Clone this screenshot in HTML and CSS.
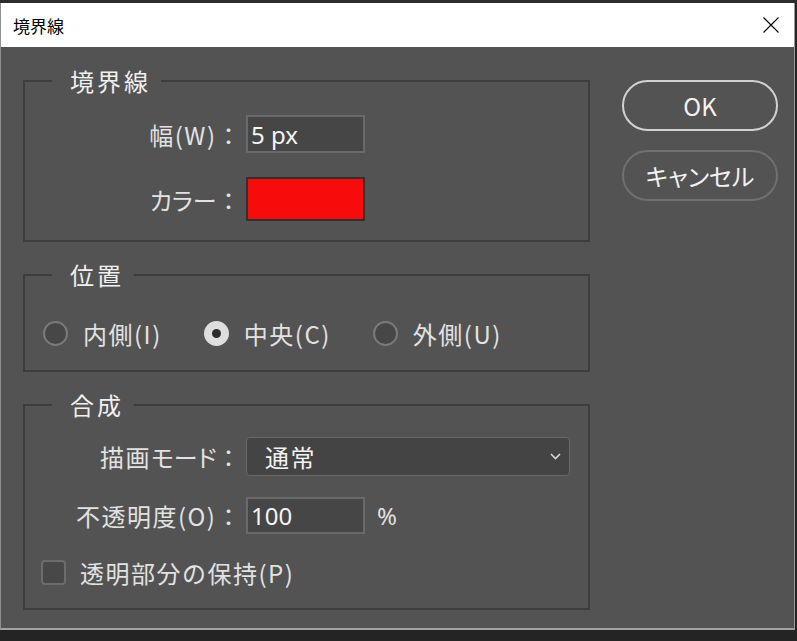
FILE: index.html
```html
<!DOCTYPE html>
<html lang="ja">
<head>
    <meta charset="UTF-8">
    <meta name="viewport" content="width=device-width, initial-scale=1.0">
    <title>境界線</title>
    <link rel="stylesheet" href="styles.css">
</head>
<body>
    <div class="window">
        <div class="titlebar">
            <span class="title">境界線</span>
            <svg class="close" width="16" height="16" viewBox="0 0 16 16">
                <path d="M0.5 0.5 L15.5 15.5 M15.5 0.5 L0.5 15.5" stroke="#000" stroke-width="1.1" fill="none"/>
            </svg>
        </div>

        <div class="dialog-body">
            <div class="panels">
                <!-- 境界線 -->
                <fieldset class="group group-stroke">
                    <legend>境界線</legend>
                    <div class="field">
                        <label class="field-label" for="width">幅(W)：</label>
                        <input class="text-input" type="text" id="width" value="5 px">
                    </div>
                    <div class="field field-color">
                        <span class="field-label"><span class="kana">カラー</span>：</span>
                        <div class="swatch"></div>
                    </div>
                </fieldset>

                <!-- 位置 -->
                <fieldset class="group group-position">
                    <legend>位置</legend>
                    <div class="radio-row">
                        <label class="option">
                            <span class="radio"></span>
                            <span>内側(I)</span>
                        </label>
                        <label class="option">
                            <span class="radio checked"></span>
                            <span>中央(C)</span>
                        </label>
                        <label class="option">
                            <span class="radio"></span>
                            <span>外側(U)</span>
                        </label>
                    </div>
                </fieldset>

                <!-- 合成 -->
                <fieldset class="group group-blend">
                    <legend>合成</legend>
                    <div class="field field-mode">
                        <span class="field-label">描画<span class="kana">モード</span>：</span>
                        <div class="select">
                            <span>通常</span>
                            <svg class="chevron" width="11" height="7" viewBox="0 0 11 7">
                                <path d="M1 1 L5.5 5.5 L10 1" stroke="#d8d8d8" stroke-width="1.6" fill="none"/>
                            </svg>
                        </div>
                    </div>
                    <div class="field field-opacity">
                        <label class="field-label" for="opacity">不透明度(O)：</label>
                        <input class="text-input" type="text" id="opacity" value="100">
                        <span class="unit">%</span>
                    </div>
                    <label class="check-row">
                        <span class="checkbox"></span>
                        <span>透明部分の保持(P)</span>
                    </label>
                </fieldset>
            </div>

            <div class="buttons">
                <button class="btn btn-primary">OK</button>
                <button class="btn btn-cancel"><span class="kana">キャンセル</span></button>
            </div>
        </div>
    </div>
</body>
</html>
```

FILE: styles.css
```css
* {
    margin: 0;
    padding: 0;
    box-sizing: border-box;
}

body {
    background: #242424;
    font-family: "Noto Sans CJK JP", "Noto Sans", sans-serif;
    height: 641px;
    overflow: hidden;
    border-top: 3px solid #2c2c2c;
}

.window {
    width: 795px;
    border-left: 1px solid #8f8f8f;
    border-right: 1px solid #9a9a9a;
    border-bottom: 2px solid #a2a2a2;
    background: #535353;
}

.titlebar {
    height: 44px;
    background: #fff;
    display: flex;
    align-items: center;
    justify-content: space-between;
    padding: 0 15px 0 12px;
}

.title {
    font-size: 17px;
    color: #000;
}

.close {
    display: block;
}

.dialog-body {
    height: 581px;
    display: flex;
    padding: 19px 0 0 22px;
    color: #e2e2e2;
    font-size: 24px;
    letter-spacing: 1.5px;
}

.panels {
    width: 567px;
    display: flex;
    flex-direction: column;
    gap: 18px;
}

.group {
    border: 2px solid #3d3d3d;
    padding: 0;
    min-width: 0;
}

.group legend {
    margin-left: 27px;
    padding: 0 10px 0 18px;
    line-height: 30px;
    color: #f0f0f0;
    letter-spacing: 3px;
}

.group-stroke {
    padding: 19px 0;
}

.group-position {
    padding: 23px 0 17px;
}

.group-blend {
    padding: 17px 0 24px;
}

.kana {
    font-feature-settings: "palt";
    letter-spacing: 0;
}

.field {
    display: flex;
    align-items: center;
    height: 38px;
}

.field-label {
    width: 221px;
    padding-right: 4px;
    text-align: right;
    white-space: nowrap;
}

.field-color {
    height: 44px;
    margin-top: 24px;
}

.text-input {
    width: 119px;
    height: 38px;
    background: #464646;
    border: 2px solid #6a6a6a;
    color: #f4f4f4;
    font-family: "Noto Sans", sans-serif;
    font-size: 24px;
    padding: 0 3px;
    outline: none;
}

.swatch {
    width: 119px;
    height: 44px;
    background: #f70c0b;
    border: 2px solid #303030;
}

.radio-row {
    display: flex;
    align-items: center;
    height: 40px;
    padding-left: 18px;
    gap: 42px;
}

.option {
    display: flex;
    align-items: center;
    gap: 15px;
}

.radio {
    flex-shrink: 0;
    width: 25px;
    height: 25px;
    border-radius: 50%;
    background: #474747;
    border: 2px solid #7a7a7a;
    display: flex;
    align-items: center;
    justify-content: center;
}

.radio.checked {
    background: #dedede;
    border-color: #dedede;
}

.radio.checked::after {
    content: "";
    width: 9px;
    height: 9px;
    border-radius: 50%;
    background: #2c2c2c;
}

.field-mode {
    height: 39px;
}

.select {
    width: 324px;
    height: 39px;
    background: #444;
    border: 1px solid #686868;
    border-radius: 4px;
    display: flex;
    align-items: center;
    justify-content: space-between;
    padding: 0 8px 0 18px;
    color: #f2f2f2;
}

.field-opacity {
    height: 37px;
    margin-top: 21px;
}

.field-opacity .text-input {
    height: 37px;
}

.unit {
    margin-left: 12px;
    font-family: "Noto Sans", sans-serif;
}

.check-row {
    display: flex;
    align-items: center;
    gap: 14px;
    height: 24px;
    margin-top: 26px;
    padding-left: 16px;
}

.checkbox {
    flex-shrink: 0;
    width: 25px;
    height: 25px;
    background: #484848;
    border: 2px solid #6c6c6c;
    border-radius: 4px;
}

.buttons {
    margin-left: 32px;
    padding-top: 14px;
    display: flex;
    flex-direction: column;
    gap: 19px;
}

.btn {
    width: 156px;
    height: 51px;
    border-radius: 26px;
    background: transparent;
    color: #f2f2f2;
    font-family: "Noto Sans CJK JP", "Noto Sans", sans-serif;
    font-size: 24px;
    border: 2px solid #d2d2d2;
}

.btn-cancel {
    border-color: #707070;
}
```
